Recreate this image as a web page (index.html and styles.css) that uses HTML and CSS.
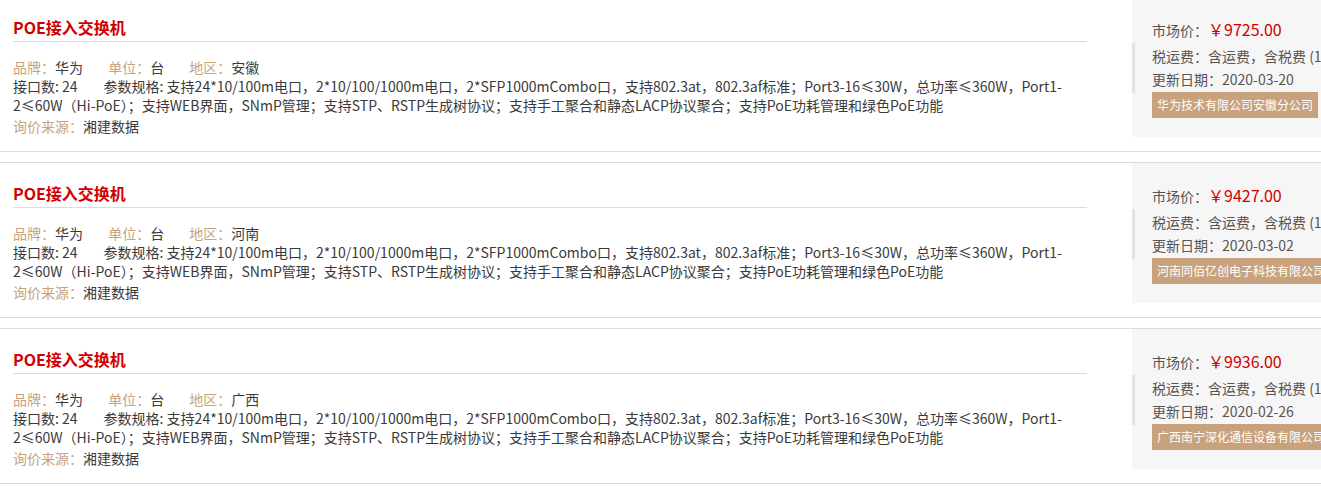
FILE: index.html
```html
<!DOCTYPE html>
<html lang="zh-CN">
<head>
  <meta charset="UTF-8" />
  <title>询价结果</title>
  <link rel="stylesheet" href="styles.css">
</head>
<body>
  <div class="list">

    <div class="item">
      <div class="info">
        <h3 class="title">POE接入交换机</h3>
        <div class="meta">
          <span><em>品牌：</em>华为</span>
          <span><em>单位：</em>台</span>
          <span><em>地区：</em>安徽</span>
        </div>
        <p class="spec"><span>接口数: 24</span>参数规格: 支持24*10/100m电口，2*10/100/1000m电口，2*SFP1000mCombo口，支持802.3at，802.3af标准；Port3-16≤30W，总功率≤360W，Port1-2≤60W（Hi-PoE）；支持WEB界面，SNmP管理；支持STP、RSTP生成树协议；支持手工聚合和静态LACP协议聚合；支持PoE功耗管理和绿色PoE功能</p>
        <div class="source"><em>询价来源：</em>湘建数据</div>
      </div>
      <div class="price-box">
        <div class="price">市场价：<b>￥9725.00</b></div>
        <div class="row">税运费：含运费，含税费 (13%)</div>
        <div class="row">更新日期：2020-03-20</div>
        <span class="company">华为技术有限公司安徽分公司</span>
      </div>
    </div>

    <div class="item">
      <div class="info">
        <h3 class="title">POE接入交换机</h3>
        <div class="meta">
          <span><em>品牌：</em>华为</span>
          <span><em>单位：</em>台</span>
          <span><em>地区：</em>河南</span>
        </div>
        <p class="spec"><span>接口数: 24</span>参数规格: 支持24*10/100m电口，2*10/100/1000m电口，2*SFP1000mCombo口，支持802.3at，802.3af标准；Port3-16≤30W，总功率≤360W，Port1-2≤60W（Hi-PoE）；支持WEB界面，SNmP管理；支持STP、RSTP生成树协议；支持手工聚合和静态LACP协议聚合；支持PoE功耗管理和绿色PoE功能</p>
        <div class="source"><em>询价来源：</em>湘建数据</div>
      </div>
      <div class="price-box">
        <div class="price">市场价：<b>￥9427.00</b></div>
        <div class="row">税运费：含运费，含税费 (13%)</div>
        <div class="row">更新日期：2020-03-02</div>
        <span class="company">河南同佰亿创电子科技有限公司</span>
      </div>
    </div>

    <div class="item">
      <div class="info">
        <h3 class="title">POE接入交换机</h3>
        <div class="meta">
          <span><em>品牌：</em>华为</span>
          <span><em>单位：</em>台</span>
          <span><em>地区：</em>广西</span>
        </div>
        <p class="spec"><span>接口数: 24</span>参数规格: 支持24*10/100m电口，2*10/100/1000m电口，2*SFP1000mCombo口，支持802.3at，802.3af标准；Port3-16≤30W，总功率≤360W，Port1-2≤60W（Hi-PoE）；支持WEB界面，SNmP管理；支持STP、RSTP生成树协议；支持手工聚合和静态LACP协议聚合；支持PoE功耗管理和绿色PoE功能</p>
        <div class="source"><em>询价来源：</em>湘建数据</div>
      </div>
      <div class="price-box">
        <div class="price">市场价：<b>￥9936.00</b></div>
        <div class="row">税运费：含运费，含税费 (13%)</div>
        <div class="row">更新日期：2020-02-26</div>
        <span class="company">广西南宁深化通信设备有限公司</span>
      </div>
    </div>

  </div>
</body>
</html>
```

FILE: styles.css
```css
:root {
  --line: #dcdcdc;
  --red: #d10000;
  --tan: #c8a27c;
  --text: #3a3a3a;
}

body {
  margin: 0;
  overflow: hidden;
  font-family: "Noto Sans CJK SC", "Noto Sans", sans-serif;
  font-size: 14px;
  color: var(--text);
  background: #fff;
}

.list {
  width: 1400px;
  margin-top: -4px;
}

.item {
  display: flex;
  gap: 32px;
  height: 154px;
  border-top: 1px solid var(--line);
  border-bottom: 1px solid var(--line);
  margin-bottom: 10px;
}

.info {
  width: 1074px;
  padding: 0 13px;
  flex-shrink: 0;
}

.title {
  margin: 0;
  padding: 18px 0 2px;
  font-size: 16px;
  line-height: 24px;
  font-weight: bold;
  color: var(--red);
  border-bottom: 1px solid var(--line);
}

.meta {
  margin-top: 15px;
  line-height: 20px;
}

.meta span {
  margin-right: 22px;
}

.spec span {
  margin-right: 26px;
}

em {
  font-style: normal;
  color: var(--tan);
}

.spec {
  margin: 0;
  line-height: 19px;
}

.source {
  margin-top: 1px;
  line-height: 20px;
}

.price-box {
  position: relative;
  width: 230px;
  height: 123px;
  padding: 17px 0 0 20px;
  background: #f6f6f6;
  color: #555;
  white-space: nowrap;
}

.price-box::before {
  content: "";
  position: absolute;
  left: 0;
  top: 46px;
  width: 3px;
  height: 50px;
  background: #e2e2e2;
}

.price {
  line-height: 30px;
}

.price b {
  font-weight: normal;
  font-size: 16px;
  color: var(--red);
}

.row {
  line-height: 23px;
}

.company {
  display: inline-block;
  margin-top: 1px;
  padding: 0 5px;
  line-height: 26px;
  font-size: 12px;
  color: #fff;
  background: var(--tan);
}
```
